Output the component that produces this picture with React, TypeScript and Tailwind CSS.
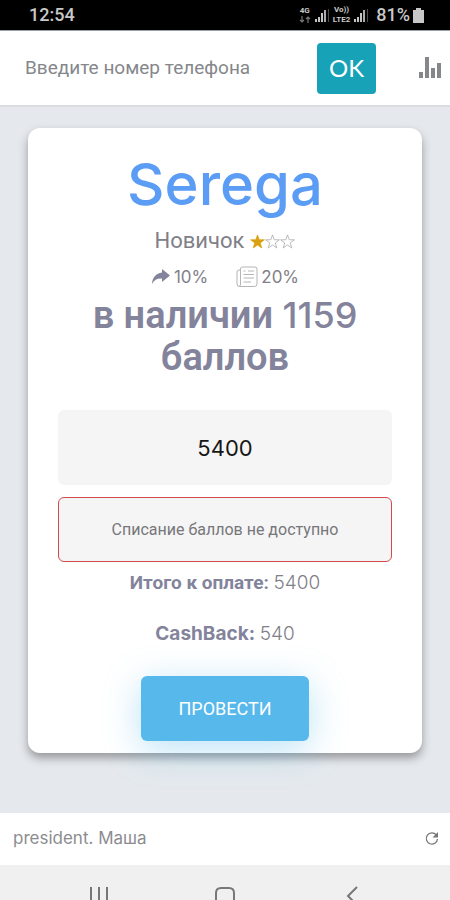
import type { ReactNode } from "react";

const latin = "font-[Inter,Roboto,sans-serif]";

function SignalBars() {
  return (
    <svg viewBox="0 0 16 16" className="h-4 w-4" aria-hidden="true">
      <path d="M1 12h2v3H1zM4 10h2v5H4zM7 6h2v9H7z" fill="#c4c4c4" />
      <path d="M10 3h2v12h-2z" fill="#aaa" />
      <path d="M14 2h1v13h-1z" fill="#4c4c4c" />
    </svg>
  );
}

function StatusBar() {
  return (
    <div className="flex h-[31px] items-center border-b border-gray-400 bg-black pr-[26px] pl-[29px] text-lg text-[#c8c8c8]">
      <span className="font-medium">12:54</span>
      <div className="ml-auto flex items-center gap-[3px]">
        <div className="flex flex-col items-center text-[8px] leading-[10px] font-bold">
          <span>4G</span>
          <svg viewBox="0 0 12 8" className="h-2 w-3" aria-hidden="true">
            <path d="M3 0v6M1 4l2 2 2-2M9 7V1M7 3l2-2 2 2" fill="none" stroke="#777" strokeWidth="1.200" />
          </svg>
        </div>
        <SignalBars />
        <div className="flex flex-col items-center text-[8px] leading-[10px] font-bold">
          <span>Vo))</span>
          <span>LTE2</span>
        </div>
        <SignalBars />
        <span className="pl-1 font-medium">81%</span>
        <svg viewBox="0 0 11 15" className="h-[15px] w-[11px]" aria-hidden="true">
          <path d="M3 0h5v2h3v13H0V2h3z" fill="#c8c8c8" />
        </svg>
      </div>
    </div>
  );
}

function SearchBar() {
  return (
    <header className="flex h-[76px] items-center border-b-2 border-[#d9dde1] bg-white pr-2 pl-[25px]">
      <input
        type="tel"
        aria-label="Введите номер телефона"
        placeholder="Введите номер телефона"
        className="min-w-0 flex-1 text-[19px] text-gray-600 outline-none placeholder:text-[#85878b]"
      />
      <button
        type="button"
        className="h-[51px] w-[59px] rounded bg-[#17a2b8] font-[Lato,sans-serif] text-2xl text-white"
      >
        OK
      </button>
      <button type="button" aria-label="Статистика" className="ml-[42px]">
        <svg viewBox="0 0 24 24" className="h-6 w-6" aria-hidden="true">
          <path d="M1 16h4v6H1zM7 1h4v21H7zM13 12h4v10h-4zM19 7h4v15h-4z" fill="#85878b" />
        </svg>
      </button>
    </header>
  );
}

function Star({ filled }: { filled?: boolean }) {
  return (
    <svg viewBox="0 0 24 24" className="h-[15px] w-[15px]" aria-hidden="true">
      <path
        d="M12 1.500l2.700 7.700 8.300.1-6.600 5 2.400 8L12 17.500l-6.800 4.800 2.400-8-6.600-5 8.300-.1z"
        fill={filled ? "#daa010" : "none"}
        stroke={filled ? "#daa010" : "#a5a5aa"}
        strokeWidth="1.200"
      />
    </svg>
  );
}

function ShareIcon() {
  return (
    <svg viewBox="0 0 20 16" className="h-4 w-5" aria-hidden="true">
      <path d="M11 0l8 6.500-8 6.500V9.500C6 9.200 3.200 11 1 15c.2-6 4-11 10-11.500z" fill="#83839b" />
    </svg>
  );
}

function NewsIcon() {
  return (
    <svg viewBox="0 0 22 22" className="h-[22px] w-[22px]" fill="none" stroke="#b5b5b8" aria-hidden="true">
      <path d="M4.500 4V3q0-2 2-2h12.500q2 0 2 2v15q0 2.500-2.500 2.500h-15Q1 20.500 1 18V6q0-2 2-2h1.500v14q0 2.500-1.500 2.500" />
      <path d="M7.500 5h2M12 5h6M7.500 8.500H18M7.500 12H18M7.500 16H15" />
    </svg>
  );
}

function Perk({ icon, value }: { icon: ReactNode; value: string }) {
  return (
    <span className="flex items-center gap-[3px]">
      {icon}
      {value}
    </span>
  );
}

function Total({ label, value }: { label: ReactNode; value: number }) {
  return (
    <p className="text-[19px] leading-[27px]">
      <b className="font-bold text-[#83839b]">{label}</b>{" "}
      <span className={`${latin} font-light`}>{value}</span>
    </p>
  );
}

function CustomerCard() {
  return (
    <section className="mx-7 mt-[21px] rounded-xl bg-white px-[30px] pt-[22px] pb-3 text-center text-[#808088] shadow-[0_5px_10px_rgba(0,0,0,0.35)]">
      <h1 className={`${latin} text-[58px] leading-[68px] font-medium text-[#5b9cf5]`}>Serega</h1>
      <div className="mt-2 flex items-center justify-center gap-[6px] text-[22px] leading-[30px]">
        Новичок
        <span className="flex">
          <Star filled />
          <Star />
          <Star />
        </span>
      </div>
      <div className={`${latin} mt-2 flex justify-center gap-7 text-[17px] leading-[26px]`}>
        <Perk icon={<ShareIcon />} value="10%" />
        <Perk icon={<NewsIcon />} value="20%" />
      </div>
      <h2 className="mt-1 text-[38px] leading-[42px] font-semibold text-[#83839b]">
        в наличии <span className={`${latin} text-[36px] font-medium`}>1159</span> баллов
      </h2>
      <input
        type="text"
        inputMode="numeric"
        aria-label="Сумма покупки"
        defaultValue="5400"
        className={`${latin} mt-8 block h-[75px] w-full rounded-md bg-[#f5f5f5] text-center text-[22px] text-[#171717]`}
      />
      <input
        type="text"
        aria-label="Списание баллов"
        placeholder="Списание баллов не доступно"
        readOnly
        className="mt-3 block h-[65px] w-full rounded-md border border-[#d04a4e] bg-[#f5f5f5] text-center text-base placeholder:text-[#77777b]"
      />
      <div className="mt-[7px] flex flex-col gap-6">
        <Total label="Итого к оплате:" value={5400} />
        <Total label={<span className={latin}>CashBack:</span>} value={540} />
      </div>
      <button
        type="button"
        className="mt-[29px] h-[65px] w-[168px] rounded-md bg-[#56b8eb] text-lg text-white shadow-[0_8px_36px_rgba(86,184,235,0.4)]"
      >
        ПРОВЕСТИ
      </button>
    </section>
  );
}

function AccountBar() {
  return (
    <footer className="flex h-[52px] items-center justify-between bg-white pr-[10px] pl-[13px] text-[17px] text-[#8c8c90]">
      <span className={latin}>president. Маша</span>
      <button type="button" aria-label="Обновить">
        <svg viewBox="0 0 16 16" className="h-4 w-4" aria-hidden="true">
          <path d="M13.500 8a5.600 5.600 0 1 1-1.200-4" fill="none" stroke="#77777a" strokeWidth="1.300" />
          <path d="M14 1v5.500H8.500z" fill="#77777a" />
        </svg>
      </button>
    </footer>
  );
}

function NavigationBar() {
  return (
    <nav className="grid h-[35px] grid-cols-3 items-end overflow-hidden bg-[#f0f0f0] px-9">
      <button type="button" aria-label="Недавние" className="flex justify-center">
        <svg viewBox="0 0 20 14" className="h-[14px] w-5" aria-hidden="true">
          <path d="M2 1v13M10 1v13M18 1v13" stroke="#77777a" strokeWidth="2" />
        </svg>
      </button>
      <button type="button" aria-label="Домой" className="flex justify-center">
        <svg viewBox="0 0 20 14" className="h-[14px] w-5" aria-hidden="true">
          <path d="M1 14V7q0-5 5-5h8q5 0 5 5v7" fill="none" stroke="#77777a" strokeWidth="2" />
        </svg>
      </button>
      <button type="button" aria-label="Назад" className="flex justify-center">
        <svg viewBox="0 0 14 14" className="h-[14px] w-[14px]" aria-hidden="true">
          <path d="M13 1L4 10l5 5" fill="none" stroke="#77777a" strokeWidth="2" />
        </svg>
      </button>
    </nav>
  );
}

export default function App() {
  return (
    <div className="flex min-h-screen flex-col bg-[#e5e9ed] font-[Roboto,sans-serif]">
      <StatusBar />
      <SearchBar />
      <main className="flex-1 pb-6">
        <CustomerCard />
      </main>
      <AccountBar />
      <NavigationBar />
    </div>
  );
}
